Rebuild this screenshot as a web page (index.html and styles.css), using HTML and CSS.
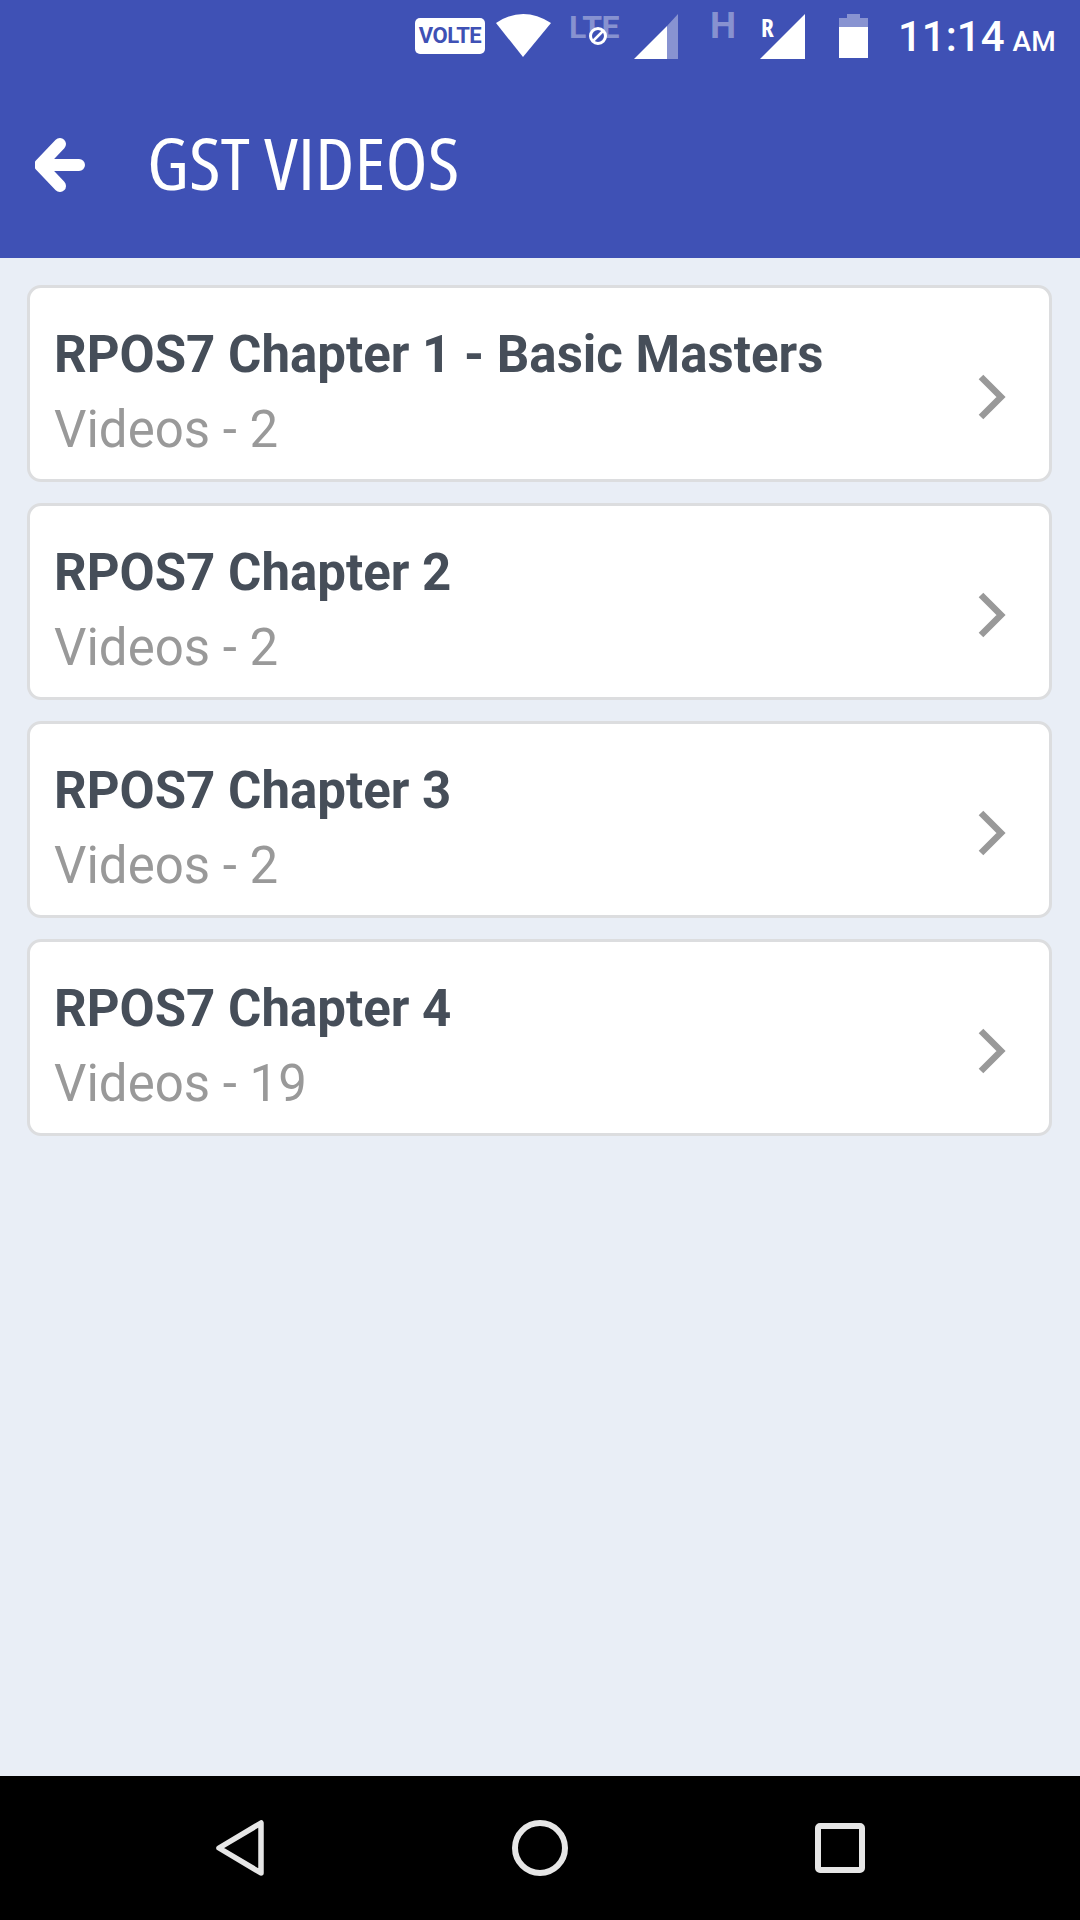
FILE: index.html
```html
<!DOCTYPE html>
<html>
<head>
<meta charset="utf-8">
<title>GST Videos</title>
<link rel="stylesheet" href="styles.css">
</head>
<body>
<div class="phone">
  <div class="header">
    <div class="status">
      <span class="volte">VOLTE</span>
      <svg class="ic-wifi" width="55" height="60" viewBox="0 0 55 60"><path d="M0 23 Q27 5 55 23 L27 57 Z" fill="#fff"/></svg>
      <span class="lte">LTE<svg class="blocked" width="20" height="20" viewBox="0 0 20 20"><circle cx="10" cy="10" r="7.5" fill="#3f51b5" stroke="#fff" stroke-width="3"/><path d="M5 15 L15 5" stroke="#fff" stroke-width="2.5"/></svg></span>
      <svg class="ic-sig1" width="44" height="60" viewBox="0 0 44 60"><path d="M0 59 L33 26 V59 Z" fill="#fff"/><path d="M33 26 L44 14 V59 H33 Z" fill="#fff" fill-opacity=".38"/></svg>
      <span class="hspa">H</span>
      <span class="roam"><span class="roam-r">R</span><svg width="45" height="60" viewBox="0 0 45 60"><path d="M0 59 L45 14 V59 Z" fill="#fff"/></svg></span>
      <svg class="ic-batt" width="29" height="60" viewBox="0 0 29 60"><path d="M8 14 H21 V18 H29 V27 H0 V18 H8 Z" fill="#fff" fill-opacity=".38"/><rect x="0" y="27" width="29" height="31" fill="#fff"/></svg>
      <span class="clock">11:14<span class="ampm">AM</span></span>
    </div>
    <div class="appbar">
      <svg class="back" width="50" height="54" viewBox="0 0 50 54"><path d="M25 6 L5 27 L25 48 M7 27 H44" fill="none" stroke="#fff" stroke-width="12" stroke-linecap="round" stroke-linejoin="round"/></svg>
      <h1 class="title">GST VIDEOS</h1>
    </div>
  </div>

  <div class="list">
    <div class="card">
      <div class="card-text">
        <div class="card-title">RPOS7 Chapter 1 - Basic Masters</div>
        <div class="card-sub">Videos - 2</div>
      </div>
      <svg class="chev" width="28" height="46" viewBox="0 0 28 46"><path d="M3 3 L23 23 L3 43" fill="none" stroke="#999" stroke-width="6.5"/></svg>
    </div>
    <div class="card">
      <div class="card-text">
        <div class="card-title">RPOS7 Chapter 2</div>
        <div class="card-sub">Videos - 2</div>
      </div>
      <svg class="chev" width="28" height="46" viewBox="0 0 28 46"><path d="M3 3 L23 23 L3 43" fill="none" stroke="#999" stroke-width="6.5"/></svg>
    </div>
    <div class="card">
      <div class="card-text">
        <div class="card-title">RPOS7 Chapter 3</div>
        <div class="card-sub">Videos - 2</div>
      </div>
      <svg class="chev" width="28" height="46" viewBox="0 0 28 46"><path d="M3 3 L23 23 L3 43" fill="none" stroke="#999" stroke-width="6.5"/></svg>
    </div>
    <div class="card">
      <div class="card-text">
        <div class="card-title">RPOS7 Chapter 4</div>
        <div class="card-sub">Videos - 19</div>
      </div>
      <svg class="chev" width="28" height="46" viewBox="0 0 28 46"><path d="M3 3 L23 23 L3 43" fill="none" stroke="#999" stroke-width="6.5"/></svg>
    </div>
  </div>

  <div class="navbar">
    <svg width="48" height="56" viewBox="0 0 48 56"><path d="M45 3 V53 L3 28 Z" fill="none" stroke="#e6e6e6" stroke-width="5.5" stroke-linejoin="round"/></svg>
    <svg width="56" height="56" viewBox="0 0 56 56"><circle cx="28" cy="28" r="25" fill="none" stroke="#e6e6e6" stroke-width="6"/></svg>
    <svg class="nav-recent" width="50" height="50" viewBox="0 0 50 50"><rect x="3" y="3" width="44" height="44" rx="2" fill="none" stroke="#e6e6e6" stroke-width="6"/></svg>
  </div>
</div>
</body>
</html>
```

FILE: styles.css
```css
* {
  box-sizing: border-box;
}

html, body {
  margin: 0;
  padding: 0;
}

body {
  width: 1080px;
  height: 1920px;
  overflow: hidden;
  font-family: Roboto, "Liberation Sans", sans-serif;
  background: #e9eef6;
}

.phone {
  display: flex;
  flex-direction: column;
  height: 1920px;
}

/* header */
.header {
  height: 258px;
  background: #3f51b5;
  color: #fff;
}

.status {
  display: flex;
  align-items: flex-start;
  height: 68px;
  padding-left: 415px;
}

.volte {
  width: 70px;
  height: 36px;
  margin-top: 18px;
  background: #fff;
  border-radius: 5px;
  color: #3f51b5;
  font: bold 22px/36px "Roboto", sans-serif;
  text-align: center;
  letter-spacing: -0.5px;
}

.ic-wifi {
  margin-left: 11px;
}

.lte {
  position: relative;
  width: 52px;
  margin-left: 18px;
  margin-top: 9px;
  color: rgba(255, 255, 255, .38);
  font: bold 32px/36px Roboto, sans-serif;
  letter-spacing: -0.5px;
}

.blocked {
  position: absolute;
  left: 19px;
  top: 17px;
}

.ic-sig1 {
  margin-left: 13px;
}

.hspa {
  margin-left: 32px;
  width: 25px;
  margin-top: 6px;
  color: rgba(255, 255, 255, .38);
  font: bold 37px/40px Roboto, sans-serif;
}

.roam {
  position: relative;
  margin-left: 25px;
}

.roam-r {
  position: absolute;
  left: 1px;
  top: 13px;
  font-family: "Open Sans", sans-serif;
  font-size: 25px;
  font-weight: bold;
  font-stretch: 75%;
  line-height: 28px;
  color: #fff;
}

.ic-batt {
  margin-left: 34px;
}

.clock {
  margin-left: 30px;
  margin-top: 13px;
  font: 500 42px/48px Roboto, sans-serif;
  white-space: nowrap;
}

.ampm {
  margin-left: 8px;
  font-size: 28px;
}

.appbar {
  display: flex;
  align-items: center;
  height: 190px;
  padding: 0 0 1px 35px;
}

.back {
  flex: none;
  margin-top: 4px;
}

.title {
  margin: 0 0 0 62px;
  font-family: "Open Sans", sans-serif;
  font-size: 71px;
  font-stretch: 75%;
  font-weight: normal;
  line-height: 80px;
  transform: scaleX(1.09);
  transform-origin: left center;
}

/* chapter list */
.list {
  flex: 1;
  display: flex;
  flex-direction: column;
  gap: 21px;
  padding: 27px 28px 0 27px;
}

.card {
  display: flex;
  justify-content: space-between;
  height: 197px;
  padding: 37px 43px 0 24px;
  background: #fff;
  border: 3px solid #dcdddf;
  border-radius: 14px;
}

.card-title {
  font-size: 51px;
  font-weight: bold;
  line-height: 60px;
  color: #464e59;
}

.card-sub {
  margin-top: 15px;
  font-size: 51px;
  line-height: 60px;
  color: #999;
}

.chev {
  margin-top: 49px;
}

/* android nav */
.navbar {
  display: flex;
  align-items: center;
  height: 144px;
  padding-left: 216px;
  background: #000;
  gap: 248px;
}

.nav-recent {
  margin-left: -1px;
}
```
